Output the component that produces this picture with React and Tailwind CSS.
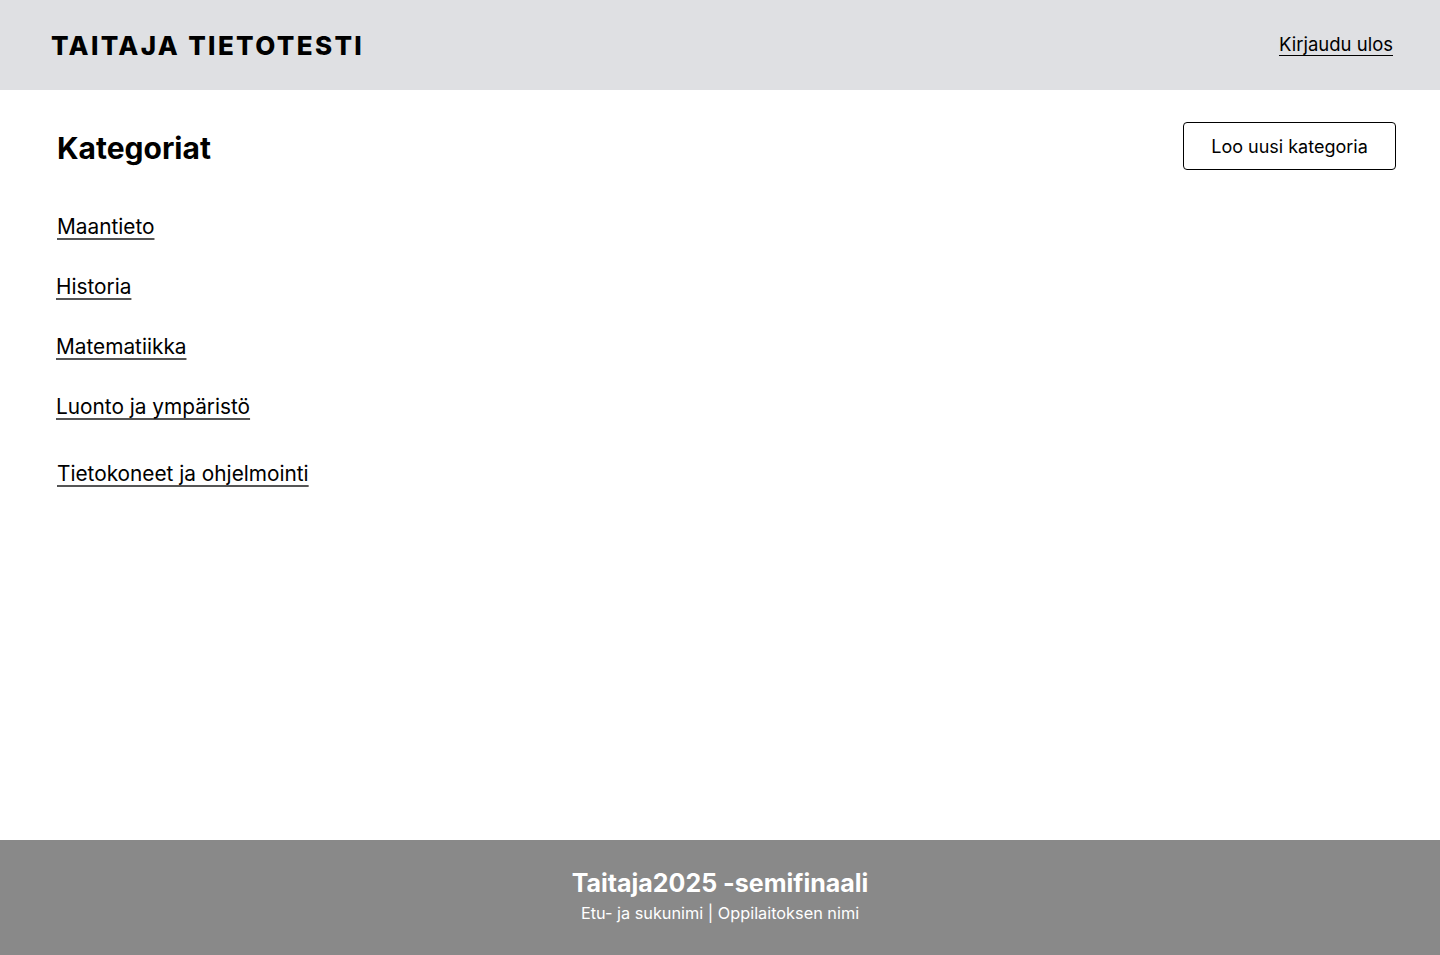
import React from "react";

const categories = [
  { name: "Maantieto", cls: "pl-[57px] mt-[43px]" },
  { name: "Historia", cls: "pl-[56px] mt-[33px]" },
  { name: "Matematiikka", cls: "pl-[56px] mt-[33px]" },
  { name: "Luonto ja ympäristö", cls: "pl-[56px] mt-[33px]" },
  { name: "Tietokoneet ja ohjelmointi", cls: "pl-[57px] mt-[40px]" },
];

export default function App() {
  return (
    <div className="min-h-screen flex flex-col bg-white text-black font-['Inter',sans-serif]">
      {/* Header */}
      <header className="h-[90px] bg-[#dfe0e3] flex items-center justify-between pl-[51px] pr-[47px]">
        <h1 className="text-[26px] font-extrabold tracking-[0.09em] leading-none mt-[2px]">TAITAJA TIETOTESTI</h1>
        <a href="#" className="text-[18.5px] underline underline-offset-[4px]">Kirjaudu ulos</a>
      </header>

      {/* Main */}
      <main className="flex-1 flex flex-col">
        <div className="flex items-start justify-between pl-[57px] pr-[44px] pt-[32px]">
          <h2 className="text-[30px] font-bold mt-[11px] leading-none">Kategoriat</h2>
          <button className="w-[213px] h-[48px] border border-black rounded-[4px] text-[18px] bg-white">
            Loo uusi kategoria
          </button>
        </div>
        <ul className="flex flex-col">
          {categories.map((c) => (
            <li key={c.name} className={c.cls}>
              <a href="#" className="text-[20.8px] leading-[27px] underline decoration-[#555] underline-offset-[4px]">
                {c.name}
              </a>
            </li>
          ))}
        </ul>
      </main>

      {/* Footer */}
      <footer className="h-[115px] bg-[#898989] text-white flex flex-col items-center pt-[28px]">
        <p className="text-[25px] font-bold leading-[30px]">Taitaja2025 -semifinaali</p>
        <p className="text-[16.3px] leading-[20px] mt-[5px]">Etu- ja sukunimi | Oppilaitoksen nimi</p>
      </footer>
    </div>
  );
}
